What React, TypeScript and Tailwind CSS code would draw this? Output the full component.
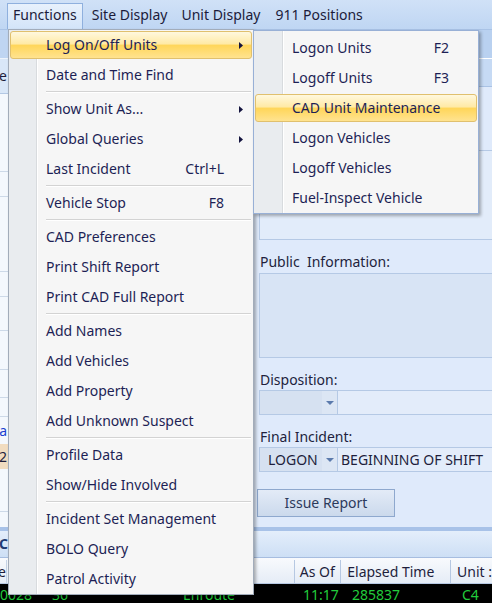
import React from 'react';
import clsx from 'clsx';

type Item = { label: string; shortcut?: string; sub?: boolean; active?: boolean };
type Entry = Item | 'sep';

const FUNCTIONS: Entry[] = [
  { label: 'Log On/Off Units', sub: true, active: true },
  { label: 'Date and Time Find' },
  'sep',
  { label: 'Show Unit As...', sub: true },
  { label: 'Global Queries', sub: true },
  { label: 'Last Incident', shortcut: 'Ctrl+L' },
  'sep',
  { label: 'Vehicle Stop', shortcut: 'F8' },
  'sep',
  { label: 'CAD Preferences' },
  { label: 'Print Shift Report' },
  { label: 'Print CAD Full Report' },
  'sep',
  { label: 'Add Names' },
  { label: 'Add Vehicles' },
  { label: 'Add Property' },
  { label: 'Add Unknown Suspect' },
  'sep',
  { label: 'Profile Data' },
  { label: 'Show/Hide Involved' },
  'sep',
  { label: 'Incident Set Management' },
  { label: 'BOLO Query' },
  { label: 'Patrol Activity' },
];

const LOG_ON_OFF: Entry[] = [
  { label: 'Logon Units', shortcut: 'F2' },
  { label: 'Logoff Units', shortcut: 'F3' },
  { label: 'CAD Unit Maintenance', active: true },
  { label: 'Logon Vehicles' },
  { label: 'Logoff Vehicles' },
  { label: 'Fuel-Inspect Vehicle' },
];

function Arrow() {
  return (
    <svg width="4" height="7" viewBox="0 0 4 7">
      <path d="M0 0L4 3.5L0 7Z" fill="#14143f" />
    </svg>
  );
}

function DropArrow() {
  return (
    <svg width="8" height="4" viewBox="0 0 8 4">
      <path d="M0 0H8L4 4Z" fill="#5b7aac" />
    </svg>
  );
}

// one row of a popup menu; `inner` picks the submenu's slightly wider indent
function MenuRow({ entry, inner }: { entry: Entry; inner?: boolean }) {
  if (entry === 'sep') {
    return (
      <div className="flex h-[4px] items-center pl-[37px] pr-[2px]">
        <div className="h-[2px] w-full border-t border-[#d3d3d3] bg-white" />
      </div>
    );
  }
  const { label, shortcut, sub, active } = entry;
  return (
    <div
      className={clsx(
        'flex items-center whitespace-nowrap text-[14px] text-[#1d1f55]',
        active
          ? 'mx-[1px] my-[1px] h-[28px] rounded-[3px] border border-[#e0c06e] bg-[linear-gradient(#fff8de,#ffeaa6_45%,#ffd65a_52%,#ffe390)]'
          : 'h-[30px]',
        inner ? (active ? 'pl-[36px]' : 'pl-[38px]') : active ? 'pl-[35px]' : 'pl-[37px]',
      )}
    >
      <span>{label}</span>
      {shortcut && <span className="ml-auto">{shortcut}</span>}
      <span
        className={clsx(
          'flex shrink-0 justify-end',
          !shortcut && 'ml-auto',
          active ? 'w-[27px] pr-[8px]' : 'w-[29px] pr-[10px]',
        )}
      >
        {sub && <Arrow />}
      </span>
    </div>
  );
}

function MenuBar() {
  return (
    <div className="flex h-[30px] shrink-0 items-end border-b border-[#a9c3e6] bg-[linear-gradient(#d0e1f7,#bfd6f3)] pl-[7px] text-[14px] text-[#1b1b3a]">
      <div className="flex h-[26px] items-center border border-b-0 border-[#8fb0de] bg-[linear-gradient(#e8f1fc,#d3e4f9)] px-[5px] pb-[3px]">
        Functions
      </div>
      <div className="flex h-[26px] items-center pb-[3px] pl-[9px]">Site Display</div>
      <div className="flex h-[26px] items-center pb-[3px] pl-[14px]">Unit Display</div>
      <div className="flex h-[26px] items-center pb-[3px] pl-[15px]">911 Positions</div>
    </div>
  );
}

// narrow strip left of the open menu: only its right edge shows
function LeftPane() {
  return (
    <div className="flex w-[253px] shrink-0 flex-col bg-[#f4f8fd] text-[14px]">
      <div className="h-[29px] shrink-0 border-b border-[#eef4fc] bg-[#bfd5f2]" />
      <div className="flex h-[35px] shrink-0 items-center border-b border-[#b3c8e4] bg-[#d9e7f8]">
        <div className="flex w-[7px] justify-end overflow-hidden whitespace-nowrap text-[#1e1e3c]">Type</div>
      </div>
      <div className="h-[78px] shrink-0 border-b border-[#cdd9e8]" />
      <div className="h-[25px] shrink-0 border-b border-[#cdd9e8]" />
      <div className="h-[75px] shrink-0 border-b border-[#cdd9e8]" />
      <div className="h-[25px] shrink-0 border-b border-[#cdd9e8]" />
      <div className="h-[34px] shrink-0 border-b border-[#cdd9e8]" />
      <div className="h-[39px] shrink-0 border-b border-[#cdd9e8]" />
      <div className="h-[28px] shrink-0 border-b border-[#cdd9e8]" />
      <div className="h-[19px] shrink-0 border-b border-[#cdd9e8]" />
      <div className="flex h-[27px] shrink-0 items-center">
        <div className="flex w-[7px] justify-end overflow-hidden whitespace-nowrap text-[#1a3fd0]">Data</div>
      </div>
      <div className="flex h-[25px] shrink-0 items-center bg-[#f1dcc0]">
        <div className="flex w-[7px] justify-end overflow-hidden whitespace-nowrap text-[#1e1e3c]">12</div>
      </div>
      <div className="h-[43px] shrink-0 border-b border-[#cdd9e8]" />
    </div>
  );
}

function Combo({ code, text }: { code?: string; text?: string }) {
  return (
    <div className="flex h-[25px] w-[270px] shrink-0 border border-[#b5c9e5] text-[14px] text-[#1e1e3c]">
      <div className="flex w-[62px] items-center bg-[#d6e1f1] pl-[8px]">{code}</div>
      <div className="flex w-[16px] items-center justify-center border-r border-[#b5c9e5] bg-[#dce6f4]">
        <DropArrow />
      </div>
      <div className="flex flex-1 items-center bg-[#e3ecfa] pl-[3px]">{text}</div>
    </div>
  );
}

function RightPane() {
  return (
    <div className="flex min-w-0 flex-1 flex-col overflow-hidden bg-[#dfeafb]">
      <div className="h-[29px] shrink-0 border-b border-white bg-[#b9d1f0]" />
      <div className="h-[28px] shrink-0 border-b border-[#a9c2e4] bg-[#c6daf4]" />
      <div className="flex flex-col pl-[6px] text-[14px] text-[#221f3d]">
        <div className="mt-[63px] h-[90px] w-[270px] shrink-0 border border-[#b5c9e5] bg-[#e2ecfa]" />
        <div className="mt-[12px] flex h-[20px] items-center pl-[1px]">Public&nbsp; Information:</div>
        <div className="mt-[1px] h-[85px] w-[270px] shrink-0 border border-[#b5c9e5] bg-[#d8e4f5]" />
        <div className="mt-[12px] flex h-[20px] items-center pl-[1px]">Disposition:</div>
        <div>
          <Combo />
        </div>
        <div className="mt-[12px] flex h-[20px] items-center pl-[1px]">Final Incident:</div>
        <div>
          <Combo code="LOGON" text="BEGINNING OF SHIFT" />
        </div>
        <button className="-ml-[2px] mt-[17px] flex h-[28px] w-[138px] items-center justify-center border border-[#8ea8ce] bg-[linear-gradient(#e3ebf7,#cbd9ec)] text-[#2c3a5c]">
          Issue Report
        </button>
      </div>
    </div>
  );
}

function CallsGrid() {
  return (
    <div className="flex flex-col text-[14px]">
      <div className="h-[4px] bg-[#a8c2e8]" />
      <div className="flex h-[27px] items-center border-b border-[#a6bde0] bg-[linear-gradient(#e4eefb,#cddff5)]">
        <span className="-ml-[1px] font-bold text-[#1f3b73]">Calls</span>
      </div>
      <div className="flex h-[26px] items-center border-b border-[#b6c8e2] bg-[linear-gradient(#f8fafd,#e5ecf6)] pt-[2px] text-[#1e1e3c]">
        <div className="flex h-full w-[7px] items-center justify-end overflow-hidden whitespace-nowrap border-r border-[#c5d3e6]">Type</div>
        <div className="h-full w-[291px] border-r border-[#b6c8e2]" />
        <div className="flex h-full w-[47px] items-center border-r border-[#b6c8e2] pl-[5px]">As Of</div>
        <div className="flex h-full w-[111px] items-center border-r border-[#b6c8e2] pl-[6px]">Elapsed Time</div>
        <div className="flex h-full items-center whitespace-nowrap pl-[6px]">Unit :</div>
      </div>
      <div className="flex h-[20px] items-center bg-black pt-[2px] text-[#22cc3c]">
        <div className="w-[46px]">0028</div>
        <div className="w-[132px] pl-[6px]">36</div>
        <div className="w-[120px] pl-[5px]">Enroute</div>
        <div className="w-[47px] pl-[5px]">11:17</div>
        <div className="w-[111px] pl-[7px]">285837</div>
        <div className="pl-[6px]">C4</div>
      </div>
    </div>
  );
}

export default function App() {
  return (
    <div className="relative h-[603px] w-[492px] overflow-hidden bg-[#dfeafb] font-['Noto_Sans',sans-serif] leading-none">
      <MenuBar />
      <div className="flex h-[497px]">
        <LeftPane />
        <RightPane />
      </div>
      <CallsGrid />

      {/* open Functions menu */}
      <div className="absolute left-[8px] top-[29px] w-[246px] border border-[#a2acba] bg-[linear-gradient(to_right,#e9ecef_27px,#d8dbde_27px,#d8dbde_28px,#ffffff_28px,#ffffff_29px,#f6f6f6_29px)] shadow-[2px_2px_3px_rgba(0,0,0,0.3)]">
        {FUNCTIONS.map((e, i) => (
          <MenuRow key={i} entry={e} />
        ))}
      </div>

      {/* Log On/Off Units submenu */}
      <div className="absolute left-[253px] top-[30px] w-[226px] border border-[#98b0d6] bg-[linear-gradient(to_right,#e9ecef_28px,#d8dbde_28px,#d8dbde_29px,#ffffff_29px,#ffffff_30px,#f6f6f6_30px)] pt-[2px] shadow-[2px_2px_3px_rgba(0,0,0,0.3)]">
        {LOG_ON_OFF.map((e, i) => (
          <MenuRow key={i} entry={e} inner />
        ))}
      </div>
    </div>
  );
}
